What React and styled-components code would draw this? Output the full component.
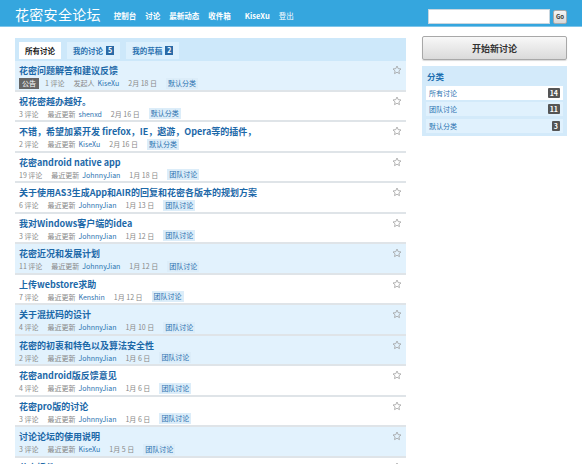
import React from "react";
import styled, { createGlobalStyle } from "styled-components";

const GlobalStyle = createGlobalStyle`
    html, body {
        margin: 0;
        padding: 0;
        background: #fff;
        font-family: "Noto Sans CJK SC", "Noto Sans", sans-serif;
    }
`;

const Header = styled.div`
    height: 25px;
    background: #35a6de;
    border-bottom: 1px solid #7ec5ea;
    display: flex;
    align-items: center;
    padding: 1px 15px 0;
`;

const SiteTitle = styled.div`
    font-size: 14px;
    color: #fff;
    margin-right: 13px;
    letter-spacing: 0.3px;
`;

const Nav = styled.div`
    display: flex;
    gap: 9px;
    margin-top: 3px;
`;

const NavLink = styled.span`
    font-size: 7.5px;
    font-weight: ${({ light }) => (light ? 400 : 700)};
    color: #fff;
    margin-right: ${({ wide }) => (wide ? "5px" : "0")};
`;

const Search = styled.div`
    margin-left: auto;
    display: flex;
    align-items: center;
    gap: 3px;
    margin-top: 6px;
`;

const SearchInput = styled.div`
    width: 120px;
    height: 13px;
    background: #fff;
    border: 1px solid #c9d6df;
`;

const GoButton = styled.div`
    width: 14px;
    height: 14px;
    box-sizing: border-box;
    border: 1px solid #aaa;
    border-radius: 2px;
    background: linear-gradient(#f5f5f5, #d8d8d8);
    font-size: 6px;
    font-weight: 700;
    color: #333;
    display: flex;
    align-items: center;
    justify-content: center;
`;

const Main = styled.div`
    display: flex;
    gap: 16px;
    padding: 9px 15px 0;
`;

const LeftColumn = styled.div`
    flex: 1;
    min-width: 0;
`;

const TabBar = styled.div`
    height: 23px;
    box-sizing: border-box;
    background: #cde8fa;
    margin-top: 2px;
    padding: 4px 4px 0;
    display: flex;
    gap: 6px;
`;

const Tab = styled.div`
    height: 17px;
    padding: 0 6px;
    display: flex;
    align-items: center;
    gap: 3px;
    font-size: 7.5px;
    font-weight: 700;
    color: ${({ active }) => (active ? "#222" : "#2b72b0")};
    background: ${({ active }) => (active ? "#fff" : "#dcf0fd")};
`;

const TabCount = styled.span`
    background: #2a6aa6;
    color: #fff;
    font-size: 7px;
    padding: 0 2px;
    line-height: 9px;
`;

const Row = styled.div`
    height: 25.5px;
    padding: 3px 4px 0 4px;
    border-bottom: 2px solid #dfe4e8;
    background: ${({ hl }) => (hl ? "#e2f2fd" : "#fff")};
    display: flex;
    justify-content: space-between;
    align-items: flex-start;
`;

const RowBody = styled.div`
    min-width: 0;
`;

const RowTitle = styled.div`
    font-size: 9px;
    font-weight: 700;
    line-height: 13px;
    color: #1c68a8;
    white-space: nowrap;
`;

const Meta = styled.div`
    display: flex;
    align-items: center;
    height: 12.5px;
    font-size: 7px;
    color: #888;
    white-space: nowrap;
`;

const MetaItem = styled.span`
    margin-right: 9px;
`;

const Author = styled.span`
    color: #2b72b0;
    margin-left: 3px;
`;

const Notice = styled.span`
    background: #666;
    color: #fff;
    padding: 0 3px;
    line-height: 11px;
    margin-right: 6px;
`;

const Category = styled.span`
    background: #dcedf9;
    color: #2b72b0;
    padding: 0 2px;
    line-height: 11px;
`;

const Star = styled.svg`
    width: 10px;
    height: 10px;
    margin-top: 1px;
    flex: none;
`;

const Sidebar = styled.div`
    width: 145px;
    flex: none;
`;

const NewButton = styled.div`
    height: 24px;
    box-sizing: border-box;
    border: 1px solid #a8a8a8;
    border-radius: 2px;
    background: linear-gradient(#f8f8f8, #dadada);
    box-shadow: 0 1px 1px rgba(0, 0, 0, 0.15);
    display: flex;
    align-items: center;
    justify-content: center;
    font-size: 9px;
    font-weight: 700;
    color: #333;
`;

const CategoryBox = styled.div`
    margin-top: 6px;
    background: #d3eafa;
    padding: 4px 4px 3px;
`;

const CategoryHeading = styled.div`
    font-size: 8.5px;
    font-weight: 700;
    color: #1d6fb0;
    line-height: 13px;
    margin-left: 1px;
`;

const CategoryItem = styled.div`
    height: 14px;
    margin-top: 2.5px;
    padding: 0 3px;
    display: flex;
    align-items: center;
    justify-content: space-between;
    font-size: 7px;
    color: #2b72b0;
    background: ${({ active }) => (active ? "#fff" : "#e0f1fd")};
`;

const CountBadge = styled.span`
    background: #555;
    color: #fff;
    font-weight: 700;
    font-size: 7px;
    line-height: 10px;
    padding: 0 2px;
    border-radius: 1px;
`;

const threads = [
    { title: "花密问题解答和建议反馈", notice: true, count: 1, who: "KiseXu", date: "2月 18 日", cat: "默认分类", hl: true },
    { title: "祝花密越办越好。", count: 3, who: "shenxd", date: "2月 16 日", cat: "默认分类" },
    { title: "不错，希望加紧开发 firefox，IE，遨游，Opera等的插件，", count: 2, who: "KiseXu", date: "2月 16 日", cat: "默认分类" },
    { title: "花密android native app", count: 19, who: "JohnnyJian", date: "1月 18 日", cat: "团队讨论" },
    { title: "关于使用AS3生成App和AIR的回复和花密各版本的规划方案", count: 6, who: "JohnnyJian", date: "1月 13 日", cat: "团队讨论" },
    { title: "我对Windows客户端的idea", count: 3, who: "JohnnyJian", date: "1月 12 日", cat: "团队讨论" },
    { title: "花密近况和发展计划", count: 11, who: "JohnnyJian", date: "1月 12 日", cat: "团队讨论", hl: true },
    { title: "上传webstore求助", count: 7, who: "Kenshin", date: "1月 12 日", cat: "团队讨论" },
    { title: "关于混扰码的设计", count: 4, who: "JohnnyJian", date: "1月 10 日", cat: "团队讨论", hl: true },
    { title: "花密的初衷和特色以及算法安全性", count: 2, who: "JohnnyJian", date: "1月 6 日", cat: "团队讨论", hl: true },
    { title: "花密android版反馈意见", count: 4, who: "JohnnyJian", date: "1月 6 日", cat: "团队讨论" },
    { title: "花密pro版的讨论", count: 3, who: "JohnnyJian", date: "1月 6 日", cat: "团队讨论" },
    { title: "讨论论坛的使用说明", count: 3, who: "KiseXu", date: "1月 5 日", cat: "团队讨论", hl: true },
    { title: "花密插件", count: 2, who: "KiseXu", date: "1月 5 日", cat: "团队讨论" },
];

const StarIcon = () => (
    <Star viewBox="0 0 24 24">
        <path
            d="M12 2.5l2.9 6.2 6.6.8-4.9 4.6 1.3 6.6L12 17.4l-5.9 3.3 1.3-6.6-4.9-4.6 6.6-.8z"
            fill="none"
            stroke="#9a9a9a"
            strokeWidth="1.8"
            strokeLinejoin="round"
        />
    </Star>
);

export default function App() {
    return (
        <>
            <GlobalStyle />
            <Header>
                <SiteTitle>花密安全论坛</SiteTitle>
                <Nav>
                    <NavLink>控制台</NavLink>
                    <NavLink>讨论</NavLink>
                    <NavLink>最新动态</NavLink>
                    <NavLink wide>收件箱</NavLink>
                    <NavLink>KiseXu</NavLink>
                    <NavLink light>登出</NavLink>
                </Nav>
                <Search>
                    <SearchInput />
                    <GoButton>Go</GoButton>
                </Search>
            </Header>
            <Main>
                <LeftColumn>
                    <TabBar>
                        <Tab active>所有讨论</Tab>
                        <Tab>
                            我的讨论 <TabCount>5</TabCount>
                        </Tab>
                        <Tab>
                            我的草稿 <TabCount>2</TabCount>
                        </Tab>
                    </TabBar>
                    {threads.map((t) => (
                        <Row key={t.title} hl={t.hl}>
                            <RowBody>
                                <RowTitle>{t.title}</RowTitle>
                                <Meta>
                                    {t.notice && <Notice>公告</Notice>}
                                    <MetaItem>{t.count} 评论</MetaItem>
                                    <MetaItem>
                                        {t.notice ? "发起人" : "最近更新"}
                                        <Author>{t.who}</Author>
                                    </MetaItem>
                                    <MetaItem>{t.date}</MetaItem>
                                    <Category>{t.cat}</Category>
                                </Meta>
                            </RowBody>
                            <StarIcon />
                        </Row>
                    ))}
                </LeftColumn>
                <Sidebar>
                    <NewButton>开始新讨论</NewButton>
                    <CategoryBox>
                        <CategoryHeading>分类</CategoryHeading>
                        <CategoryItem active>
                            所有讨论 <CountBadge>14</CountBadge>
                        </CategoryItem>
                        <CategoryItem>
                            团队讨论 <CountBadge>11</CountBadge>
                        </CategoryItem>
                        <CategoryItem>
                            默认分类 <CountBadge>3</CountBadge>
                        </CategoryItem>
                    </CategoryBox>
                </Sidebar>
            </Main>
        </>
    );
}
